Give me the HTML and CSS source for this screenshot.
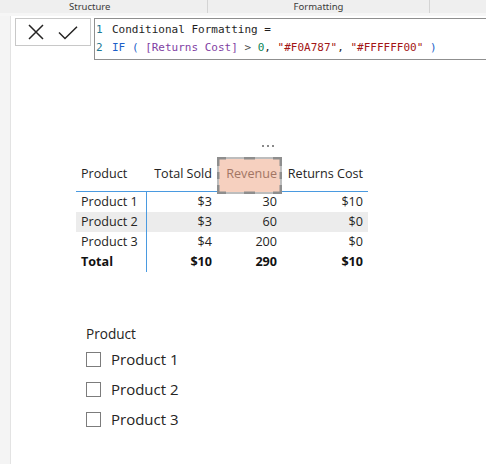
FILE: index.html
```html
<!DOCTYPE html>
<html lang="en">
<head>
<meta charset="utf-8">
<title>Conditional Formatting</title>
<link rel="stylesheet" href="styles.css">
</head>
<body>
<div class="ribbon">
  <div class="tab tab-structure">Structure</div>
  <div class="tab tab-formatting">Formatting</div>
  <div class="tab tab-rest"></div>
</div>
<div class="band"></div>
<div class="workspace">
  <div class="rail"></div>
  <div class="canvas">
    <div class="formula-bar">
      <div class="fb-actions">
        <svg class="icon" width="18" height="18" viewBox="0 0 18 18"><path d="M2 2 L16 16 M16 2 L2 16" stroke="#252423" stroke-width="1.5" fill="none"/></svg>
        <svg class="icon" width="20" height="14" viewBox="0 0 20 14"><path d="M1 6.5 L7 12.5 L19 0.8" stroke="#252423" stroke-width="1.5" fill="none"/></svg>
      </div>
      <div class="fb-editor">
        <div class="code-line"><span class="ln">1</span><span class="tx">Conditional Formatting =</span></div>
        <div class="code-line"><span class="ln">2</span><span class="tx"><span class="kw">IF</span> <span class="kw">(</span> <span class="col">[Returns Cost]</span> <span class="op">&gt;</span> <span class="num">0</span>, <span class="str">"#F0A787"</span>, <span class="str">"#FFFFFF00"</span> <span class="kw">)</span></span></div>
      </div>
    </div>

    <div class="table-visual">
      <div class="more"><span></span><span></span><span></span></div>
      <div class="trow thead">
        <div class="cell c1">Product</div>
        <div class="cell num-cell">Total Sold</div>
        <div class="cell num-cell selected">
          <svg class="sel-frame" width="65" height="37" viewBox="0 0 65 37">
            <rect x="1" y="1" width="63" height="35" fill="#f6d0bf" stroke="#bdbdbd" stroke-width="2"/>
            <path d="M1 9 V1 H9 M56 1 H64 V9 M64 28 V36 H56 M9 36 H1 V28" stroke="#8e8e8e" stroke-width="3" fill="none"/>
            <path d="M27 1 H38 M27 36 H38 M1 15 V22 M64 15 V22" stroke="#8e8e8e" stroke-width="3" fill="none"/>
          </svg>
          <span class="sel-text">Revenue</span>
        </div>
        <div class="cell num-cell">Returns Cost</div>
      </div>
      <div class="trow">
        <div class="cell c1">Product 1</div>
        <div class="cell num-cell">$3</div>
        <div class="cell num-cell">30</div>
        <div class="cell num-cell">$10</div>
      </div>
      <div class="trow alt">
        <div class="cell c1">Product 2</div>
        <div class="cell num-cell">$3</div>
        <div class="cell num-cell">60</div>
        <div class="cell num-cell">$0</div>
      </div>
      <div class="trow">
        <div class="cell c1">Product 3</div>
        <div class="cell num-cell">$4</div>
        <div class="cell num-cell">200</div>
        <div class="cell num-cell">$0</div>
      </div>
      <div class="trow total">
        <div class="cell c1">Total</div>
        <div class="cell num-cell">$10</div>
        <div class="cell num-cell">290</div>
        <div class="cell num-cell">$10</div>
      </div>
    </div>

    <div class="slicer">
      <div class="slicer-title">Product</div>
      <div class="slicer-item"><span class="box"></span><span class="label">Product 1</span></div>
      <div class="slicer-item"><span class="box"></span><span class="label">Product 2</span></div>
      <div class="slicer-item"><span class="box"></span><span class="label">Product 3</span></div>
    </div>
  </div>
</div>
</body>
</html>
```

FILE: styles.css
```css
* { box-sizing: border-box; }

html, body {
  margin: 0;
  padding: 0;
  background: #ffffff;
  height: 100%;
  overflow: hidden;
}

body {
  font-family: "Open Sans", "Noto Sans", sans-serif;
  color: #252423;
}

.ribbon {
  display: grid;
  grid-template-columns: 208px 222px 1fr;
  height: 13px;
  background: #efefef;
  font-family: "Noto Sans", sans-serif;
  font-size: 9.5px;
  line-height: 13px;
  color: #3b3a39;
}

.tab { overflow: hidden; white-space: nowrap; }
.tab-structure { padding-left: 69px; border-right: 1px solid #d4d4d4; }
.tab-formatting { text-align: center; border-right: 1px solid #d4d4d4; }

.band {
  height: 3px;
  background: #f6f6f6;
}

.workspace {
  display: flex;
  height: calc(100% - 16px);
}

.rail {
  width: 11px;
  flex: none;
  background: #f4f4f4;
  border-right: 1px solid #e3e3e3;
}

.canvas {
  flex: 1;
  min-width: 0;
  padding-top: 2px;
}

.formula-bar {
  display: flex;
  align-items: flex-start;
  gap: 3px;
  margin-left: 4px;
  margin-right: -20px;
}

.fb-actions {
  width: 76px;
  height: 28px;
  flex: none;
  border: 1px solid #c8c8c8;
  display: flex;
  align-items: center;
  padding-left: 11px;
  gap: 13px;
}

.fb-actions .icon { display: block; }
.fb-actions .icon:first-child { margin-top: -1px; }
.fb-actions .icon:last-child { margin-top: 1px; }

.fb-editor {
  flex: 1;
  height: 42px;
  border: 1px solid #8f8f8f;
  padding-top: 2px;
  font-family: "DejaVu Sans Mono", "Liberation Mono", monospace;
  font-size: 11px;
  line-height: 18px;
  color: #1e1e1e;
}

.code-line { display: flex; height: 18px; }
.tx { white-space: pre; }
.ln { width: 17px; flex: none; color: #237893; padding-left: 1px; }
.kw { color: #1c5fc9; }
.col { color: #7f3fa3; }
.op { color: #4d4d4d; }
.num { color: #098658; }
.str { color: #a31515; }

.table-visual {
  position: relative;
  width: 292px;
  margin-left: 65px;
  margin-top: 99px;
}

.more {
  position: absolute;
  left: 186px;
  top: -14px;
  display: flex;
  gap: 3px;
}
.more span {
  width: 2px;
  height: 2px;
  background: #8a8a8a;
}

.trow {
  display: grid;
  grid-template-columns: 71px 69px 66px 86px;
  height: 20px;
  font-size: 12.6px;
  line-height: 20px;
}

.thead {
  height: 33px;
  padding-top: 5px;
  border-bottom: 1px solid #4a9ae0;
}

.cell { white-space: nowrap; }
.c1 { padding-left: 5px; }
.trow:not(.thead) .c1 { border-right: 1px solid #4a9ae0; }
.num-cell { text-align: right; padding-right: 5px; }
.trow .num-cell:nth-child(2) { padding-right: 4px; }

.alt { background: #ececec; }
.total { font-weight: 700; color: #111; }

.selected { position: relative; }
.sel-frame {
  position: absolute;
  left: 1px;
  top: -7px;
  display: block;
}
.sel-text {
  position: relative;
  color: #a27564;
}

.slicer {
  margin-left: 75px;
  margin-top: 53px;
}

.slicer-title {
  font-size: 13.6px;
  line-height: 18px;
  color: #252423;
}

.slicer-item {
  display: flex;
  align-items: center;
  height: 30px;
  margin-top: 1px;
  margin-bottom: -1px;
}

.slicer-item .box {
  width: 15px;
  height: 15px;
  border: 1px solid #7c7c7c;
  flex: none;
}

.slicer-item .label {
  margin-left: 10px;
  font-size: 15px;
  color: #252423;
}
```
